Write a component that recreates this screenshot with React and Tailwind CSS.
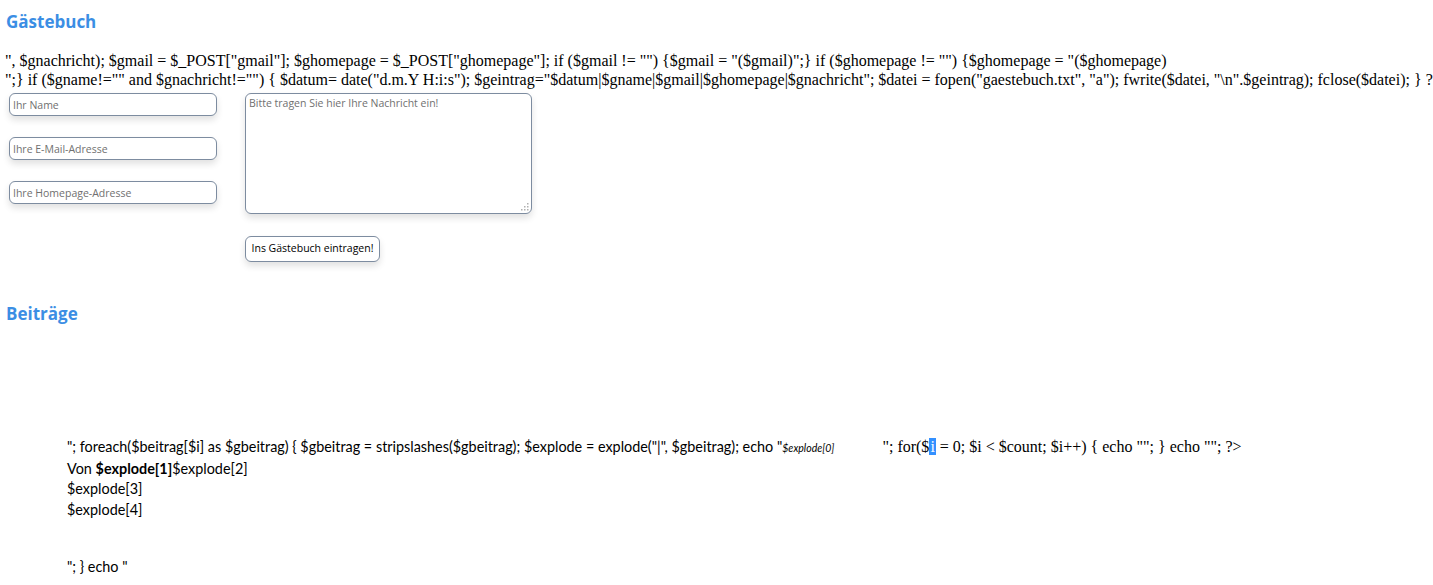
import React from "react";

const field =
  "w-[208px] h-[23px] rounded-[6px] border border-[#7d8ca0] bg-white px-[3px] text-[10.5px] font-['Open_Sans'] text-black placeholder:text-[#707070] shadow-[0_4px_7px_rgba(0,0,0,0.12)] outline-none";

export default function App() {
  return (
    <div className="w-[1433px] h-[585px] overflow-hidden bg-white text-black font-['Liberation_Serif',serif] text-[16px]">
      {/* Kopf */}
      <h2 className="pl-[6px] pt-[10px] text-[17px] leading-[24px] font-bold text-[#3b8ee4] font-['Open_Sans',sans-serif]">
        Gästebuch
      </h2>

      {/* ungerenderter PHP-Code */}
      <div className="mt-[17px] pl-[5px] whitespace-nowrap leading-[19px]">
        ", $gnachricht); $gmail = $_POST["gmail"]; $ghomepage = $_POST["ghomepage"]; if ($gmail != "") {"{"}$gmail = "($gmail)";{"}"} if ($ghomepage != "") {"{"}$ghomepage = "($ghomepage)
        <br />
        ";{"}"} if ($gname!="" and $gnachricht!="") {"{"} $datum= date("d.m.Y H:i:s"); $geintrag="$datum|$gname|$gmail|$ghomepage|$gnachricht"; $datei = fopen("gaestebuch.txt", "a"); fwrite($datei, "\n".$geintrag); fclose($datei); {"}"} ?&gt;
      </div>

      {/* Formular */}
      <form className="flex items-start pl-[9px] pt-[4px]" onSubmit={(e) => e.preventDefault()}>
        <div className="flex flex-col gap-[21px]">
          <input className={field} placeholder="Ihr Name" />
          <input className={field} placeholder="Ihre E-Mail-Adresse" />
          <input className={field} placeholder="Ihre Homepage-Adresse" />
        </div>
        <div className="ml-[28px] flex flex-col items-start">
          <div className="relative">
            <textarea
              className="block w-[287px] h-[121px] resize-none rounded-[6px] border border-[#7d8ca0] bg-white px-[3px] py-[2px] text-[10.5px] font-['Open_Sans'] placeholder:text-[#707070] shadow-[0_4px_7px_rgba(0,0,0,0.12)] outline-none"
              placeholder="Bitte tragen Sie hier Ihre Nachricht ein!"
            />
            {/* Griff zum Ziehen */}
            <svg className="absolute right-[3px] bottom-[3px]" width="8" height="8" viewBox="0 0 8 8">
              <rect x="6" y="0" width="1.5" height="1.5" fill="#b0b0b0" />
              <rect x="3" y="3" width="1.5" height="1.5" fill="#b0b0b0" />
              <rect x="6" y="3" width="1.5" height="1.5" fill="#b0b0b0" />
              <rect x="0" y="6" width="1.5" height="1.5" fill="#b0b0b0" />
              <rect x="3" y="6" width="1.5" height="1.5" fill="#b0b0b0" />
              <rect x="6" y="6" width="1.5" height="1.5" fill="#b0b0b0" />
            </svg>
          </div>
          <button
            type="submit"
            className="mt-[22px] h-[26px] w-[135px] rounded-[6px] border border-[#7d8ca0] bg-white text-[10.5px] text-black font-['Open_Sans'] shadow-[0_4px_7px_rgba(0,0,0,0.12)]"
          >
            Ins Gästebuch eintragen!
          </button>
        </div>
      </form>

      <h2 className="pl-[6px] mt-[40px] text-[17px] leading-[24px] font-bold text-[#3b8ee4] font-['Open_Sans',sans-serif]">
        Beiträge
      </h2>

      {/* Einträge */}
      <div className="mt-[111px] pl-[67px] font-['Lato',sans-serif] text-[14.4px] leading-[20.5px] whitespace-nowrap">
        <div className="flex items-baseline">
          <span>"; foreach($beitrag[$i] as $gbeitrag) {"{"} $gbeitrag = stripslashes($gbeitrag); $explode = explode("|", $gbeitrag); echo "</span>
          <span className="italic text-[10.5px]">$explode[0]</span>
          <span className="ml-[48px] font-['Liberation_Serif',serif] text-[16px]">
            "; for($<span className="inline-block bg-[#3390ff] text-white leading-[17px] px-[1px]">i</span> = 0; $i &lt; $count; $i++) {"{"} echo ""; {"}"} echo ""; ?&gt;
          </span>
        </div>
        <div>
          Von <b>$explode[1]</b>$explode[2]
        </div>
        <div>$explode[3]</div>
        <div>$explode[4]</div>
        <div className="mt-[37px]">"; {"}"} echo "</div>
      </div>
    </div>
  );
}
